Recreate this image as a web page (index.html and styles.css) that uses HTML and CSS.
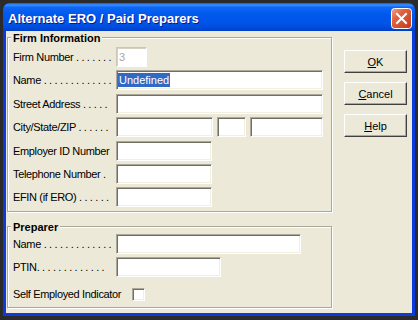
FILE: index.html
```html
<!DOCTYPE html>
<html>
<head>
<meta charset="utf-8">
<link rel="stylesheet" href="styles.css">
</head>
<body>
<div class="window">
  <div class="titlebar">
    <span class="title">Alternate ERO / Paid Preparers</span>
    <span class="close">
      <svg width="21" height="21" viewBox="0 0 21 21">
        <defs>
          <linearGradient id="cg" x1="0" y1="0" x2="1" y2="1">
            <stop offset="0" stop-color="#f0a38a"/>
            <stop offset="0.35" stop-color="#e2623f"/>
            <stop offset="1" stop-color="#c03a16"/>
          </linearGradient>
        </defs>
        <rect x="0.5" y="0.5" width="20" height="20" rx="3" ry="3" fill="url(#cg)" stroke="#ffffff" stroke-width="1"/>
        <path d="M6 6 L15 15 M15 6 L6 15" stroke="#ffffff" stroke-width="2" stroke-linecap="square"/>
      </svg>
    </span>
  </div>
  <div class="client">
    <div class="main">
      <div class="group firm">
        <span class="legend">Firm Information</span>
        <div class="row"><span class="lbl">Firm Number . . . . . . .</span><span class="field disabled w-fn">3</span></div>
        <div class="row"><span class="lbl">Name . . . . . . . . . . . . .</span><span class="field w-name"><span class="sel">Undefined</span></span></div>
        <div class="row extra"><span class="lbl">Street Address . . . . .</span><span class="field w-name"></span></div>
        <div class="row"><span class="lbl">City/State/ZIP . . . . . .</span><span class="field w-city"></span><span class="field w-state"></span><span class="field w-zip"></span></div>
        <div class="row extra"><span class="lbl">Employer ID Number</span><span class="field w-ein"></span></div>
        <div class="row"><span class="lbl">Telephone Number .</span><span class="field w-ein"></span></div>
        <div class="row"><span class="lbl">EFIN (if ERO) . . . . . .</span><span class="field w-ein"></span></div>
      </div>
      <div class="group prep">
        <span class="legend">Preparer</span>
        <div class="row"><span class="lbl">Name . . . . . . . . . . . . .</span><span class="field w-pname"></span></div>
        <div class="row"><span class="lbl">PTIN. . . . . . . . . . . . .</span><span class="field w-ptin"></span></div>
        <div class="row extra-big"><span class="lbl self">Self Employed Indicator</span><span class="check"></span></div>
      </div>
    </div>
    <div class="buttons">
      <div class="btn"><span><u>O</u>K</span></div>
      <div class="btn"><span><u>C</u>ancel</span></div>
      <div class="btn"><span><u>H</u>elp</span></div>
    </div>
  </div>
</div>
</body>
</html>
```

FILE: styles.css
```css
html, body {
  margin: 0;
  padding: 0;
}
body {
  background: #2b2b2b;
  width: 418px;
  height: 320px;
  overflow: hidden;
  font-family: "Liberation Sans", Arial, sans-serif;
  font-size: 11px;
  color: #000;
}
.window {
  margin: 3px 0 0 3px;
  width: 412px;
  height: 313px;
  box-sizing: border-box;
  background: #0b3cdb;
  border-radius: 7px 7px 0 0;
  display: flex;
  flex-direction: column;
}
.titlebar {
  height: 28px;
  flex: none;
  display: flex;
  align-items: center;
  justify-content: space-between;
  padding: 0 3px 0 5px;
  border-radius: 7px 7px 0 0;
  background: linear-gradient(to bottom,
    #0a5ee8 0%, #3b8fff 7%, #0d66f5 16%, #0058ee 40%,
    #0054e6 75%, #0048d6 92%, #003ec4 100%);
}
.title {
  color: #fff;
  font-weight: bold;
  font-size: 13px;
  padding-top: 3px;
  text-shadow: 1px 1px 0 #0a1a8a;
}
.close {
  display: block;
  width: 21px;
  height: 21px;
  margin-top: 2px;
}
.close svg {
  display: block;
}
.client {
  flex: 1;
  margin: 0 3px 3px 3px;
  background: #ece9d8;
  display: flex;
  padding: 6px 0 0 1px;
}
.main {
  display: flex;
  flex-direction: column;
  width: 325px;
  flex: none;
}
.group {
  position: relative;
  border: 1px solid #aca899;
  box-shadow: inset 1px 1px 0 #fff, 1px 1px 0 #fff;
  box-sizing: border-box;
  display: flex;
  flex-direction: column;
  gap: 3px;
  padding-left: 5px;
}
.legend {
  position: absolute;
  top: -6px;
  left: 3px;
  background: #ece9d8;
  padding: 0 2px;
  font-weight: bold;
  line-height: 13px;
}
.firm {
  height: 175px;
  padding-top: 9px;
}
.prep {
  margin-top: 14px;
  height: 82px;
  padding-top: 7px;
}
.row {
  display: flex;
  align-items: center;
  height: 20px;
  flex: none;
}
.row.extra {
  margin-top: 1px;
}
.row.extra-big {
  margin-top: 4px;
}
.lbl {
  width: 103px;
  flex: none;
  white-space: nowrap;
  letter-spacing: -0.35px;
}
.lbl.self {
  width: 119px;
}
.field {
  display: block;
  flex: none;
  height: 20px;
  box-sizing: border-box;
  background: #fff;
  border: 1px solid;
  border-color: #aca899 #fff #fff #aca899;
  box-shadow: inset 1px 1px 0 #716f64, inset -1px -1px 0 #f1efe2;
  padding: 2px 0 0 1px;
  line-height: 14px;
  white-space: nowrap;
}
.field.disabled {
  border-color: #cbc7b8 #fff #fff #cbc7b8;
  box-shadow: inset 1px 1px 0 #d6d2c2;
  color: #aca899;
  padding-left: 2px;
}
.sel {
  background: #316ac5;
  color: #fff;
  padding: 0 1px;
  display: inline-block;
}
.w-fn { width: 31px; }
.w-name { width: 207px; }
.w-city { width: 97px; }
.w-state { width: 29px; margin-left: 4px; }
.w-zip { width: 73px; margin-left: 4px; }
.w-ein { width: 96px; }
.w-pname { width: 185px; }
.w-ptin { width: 105px; }
.check {
  display: block;
  width: 13px;
  height: 13px;
  box-sizing: border-box;
  background: #fff;
  border: 1px solid;
  border-color: #aca899 #fff #fff #aca899;
  box-shadow: inset 1px 1px 0 #716f64, inset -1px -1px 0 #f1efe2;
}
.buttons {
  display: flex;
  flex-direction: column;
  gap: 9px;
  margin-left: 12px;
  padding-top: 13px;
}
.btn {
  width: 63px;
  height: 23px;
  box-sizing: border-box;
  background: #ece9d8;
  border: 1px solid;
  border-color: #fff #404040 #404040 #fff;
  box-shadow: inset -1px -1px 0 #aca899;
  display: flex;
  align-items: center;
  justify-content: center;
  font-size: 11px;
}
```
